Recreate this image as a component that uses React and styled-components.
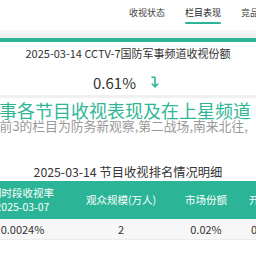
import React from 'react';
import styled, { createGlobalStyle } from 'styled-components';

const TEAL = '#2bb596';

const GlobalStyle = createGlobalStyle`
  body {
    margin: 0;
    background: #fff;
    font-family: "Noto Sans CJK SC", "Noto Sans", sans-serif;
    color: #333;
    overflow: hidden;
  }
`;

const Page = styled.div`
  width: 256px;
  overflow: hidden;
`;

const Nav = styled.nav`
  display: flex;
  height: 30px;
  padding-left: 129px;
  gap: 20px;
  background: #fff;
  box-shadow: 0 1px 4px rgba(0, 0, 0, 0.06);
`;

const Tab = styled.div`
  display: flex;
  flex-direction: column;
  align-items: center;
  flex-shrink: 0;
  padding-top: 7px;
  font-size: 9px;
  line-height: 11px;
  color: ${(p) => (p.$active ? '#222' : '#444')};
  white-space: nowrap;

  &::after {
    content: '';
    width: 100%;
    height: 2px;
    margin-top: 4px;
    border-radius: 1px;
    background: ${(p) => (p.$active ? TEAL : 'transparent')};
  }
`;

const Band = styled.div`
  height: 8px;
  background: linear-gradient(#f7f7f7, #eeeeee);
`;

const Card = styled.section`
  border-top: 4px solid ${TEAL};
  background: #fff;
  padding-top: 4px;
`;

const Title = styled.h2`
  margin: 0;
  text-align: center;
  font-size: ${(p) => p.$size || 11}px;
  line-height: 14px;
  font-weight: 400;
  color: #333;
  white-space: nowrap;
`;

const ValueRow = styled.div`
  display: flex;
  align-items: center;
  justify-content: center;
  gap: 14px;
  margin-top: 12px;
  padding-right: 4px;
  height: 20px;
`;

const Value = styled.span`
  font-size: 15px;
  color: #333;
`;

const Divider = styled.div`
  height: 3px;
  margin-top: 3px;
  background: #f0f0f0;
`;

const Headline = styled.div`
  margin-top: 3px;
  margin-left: ${(p) => p.$shift}px;
  white-space: nowrap;
  font-size: 18px;
  line-height: 18px;
  color: #2fb795;
`;

const Summary = styled.div`
  margin-left: ${(p) => p.$shift}px;
  white-space: nowrap;
  font-size: 12.8px;
  line-height: 14px;
  color: #999;
`;

const TableTitle = styled(Title)`
  margin-top: 31px;
  line-height: 16px;
`;

const Table = styled.div`
  display: grid;
  grid-template-columns: 111px 86px 84px 120px;
  margin-left: -33px;
  margin-top: 1px;
  width: 401px;
`;

const HeadCell = styled.div`
  display: flex;
  flex-direction: column;
  align-items: ${(p) => (p.$left ? 'flex-start' : 'center')};
  justify-content: center;
  height: 38px;
  padding-left: ${(p) => (p.$left ? 1 : 0)}px;
  background: ${TEAL};
  color: #fff;
  font-size: 10.5px;
  line-height: 14px;
  white-space: nowrap;
`;

const Cell = styled.div`
  display: flex;
  align-items: center;
  justify-content: ${(p) => (p.$left ? 'flex-start' : 'center')};
  height: 20px;
  padding-left: ${(p) => (p.$left ? 3 : 0)}px;
  background: #f7f7f7;
  border-bottom: 1px solid #ececec;
  font-size: 11px;
  color: #333;
  white-space: nowrap;
`;

const DownArrow = () => (
  <svg width="9" height="12" viewBox="0 0 9 12" fill="none" stroke={TEAL} strokeWidth="1.6" strokeLinecap="round" strokeLinejoin="round">
    <path d="M2 1.2H5V10.8" />
    <path d="M2.2 8L5 10.8L7.8 8" />
  </svg>
);

const tabs = ['收视状态', '栏目表现', '竞品对比'];

export default function App() {
  return (
    <Page>
      <GlobalStyle />
      <Nav>
        {tabs.map((t) => (
          <Tab key={t} $active={t === '栏目表现'}>{t}</Tab>
        ))}
      </Nav>
      <Band />
      <Card>
        <Title>2025-03-14 CCTV-7国防军事频道收视份额</Title>
        <ValueRow>
          <Value>0.61%</Value>
          <DownArrow />
        </ValueRow>
        <Divider />
        <Headline $shift={-19}>军事各节目收视表现及在上星频道</Headline>
        <Summary $shift={-26}>排名前3的栏目为防务新观察,第二战场,南来北往,</Summary>
        <TableTitle $size={12.3}>2025-03-14 节目收视排名情况明细</TableTitle>
        <Table>
          <HeadCell>
            <span>同时段收视率</span>
            <span>2025-03-07</span>
          </HeadCell>
          <HeadCell>观众规模(万人)</HeadCell>
          <HeadCell>市场份额</HeadCell>
          <HeadCell $left>开机率(%)</HeadCell>
          <Cell>0.0024%</Cell>
          <Cell>2</Cell>
          <Cell>0.02%</Cell>
          <Cell $left>0.01</Cell>
        </Table>
      </Card>
    </Page>
  );
}
